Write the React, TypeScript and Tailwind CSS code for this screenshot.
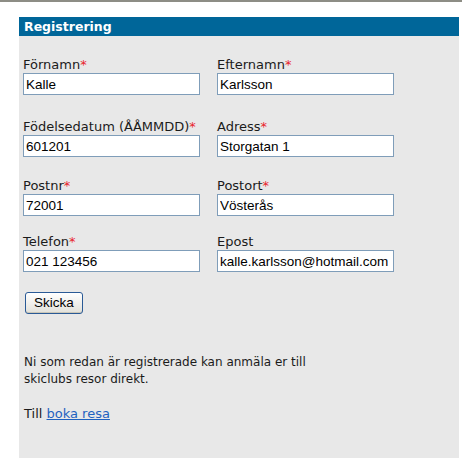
type FieldProps = {
    label: string,
    value: string,
    required?: boolean,
    className?: string
}

function Field({ label, value, required, className }: FieldProps) {
    return (
        <div className={className}>
            <label className="block leading-[16px]">
                {label}
                {required && <span className="text-[#e8242c]">*</span>}
            </label>
            <input
                type="text"
                defaultValue={value}
                className="block h-[22px] w-[177px] border border-[#7f9db9] bg-white px-[2px] font-['Liberation_Sans',Arial,sans-serif] text-[13.5px] text-black outline-none"
            />
        </div>
    )
}

export default function App() {
    return (
        <div className="h-[458px] w-[462px] overflow-hidden bg-white font-['DejaVu_Sans',Verdana,sans-serif] text-[13px] text-[#1b1b1b]">
            <div className="h-[2px] bg-[#8d8d85]" />
            <div className="ml-[19px] mr-[3px] mt-[15px] h-[441px] bg-[#e8e8e8]">
                <h2 className="h-[19px] pl-[5px] text-[12.5px] font-bold leading-[19px] text-white bg-[#006699]">Registrering</h2>

                <form className="pl-[4px]">
                    {/* rader med fält */}
                    <div className="grid grid-cols-[194px_194px]">
                        <Field className="mt-[21px]" label="Förnamn" value="Kalle" required />
                        <Field className="mt-[21px]" label="Efternamn" value="Karlsson" required />
                        <Field className="mt-[24px]" label="Födelsedatum (ÅÅMMDD)" value="601201" required />
                        <Field className="mt-[24px]" label="Adress" value="Storgatan 1" required />
                        <Field className="mt-[21px]" label="Postnr" value="72001" required />
                        <Field className="mt-[21px]" label="Postort" value="Vösterås" required />
                        <Field className="mt-[18px]" label="Telefon" value="021 123456" required />
                        <Field className="mt-[18px]" label="Epost" value="kalle.karlsson@hotmail.com" />
                    </div>

                    <button
                        type="button"
                        className="mt-[20px] ml-[2px] h-[22px] w-[58px] rounded-[3px] border border-[#2a5a96] bg-gradient-to-b from-[#ffffff] to-[#e2e1da] font-['Liberation_Sans',Arial,sans-serif] text-[13.5px] text-black shadow-[inset_0_-1px_0_#c9c6b8]"
                    >
                        Skicka
                    </button>
                </form>

                <p className="mt-[40px] pl-[5px] text-[12px] leading-[17px]">
                    Ni som redan är registrerade kan anmäla er till<br />
                    skiclubs resor direkt.
                </p>
                <p className="mt-[17px] pl-[5px] text-[13px] leading-[17px]">
                    Till <a href="#" className="text-[#1f62c0] underline">boka resa</a>
                </p>
            </div>
        </div>
    )
}
